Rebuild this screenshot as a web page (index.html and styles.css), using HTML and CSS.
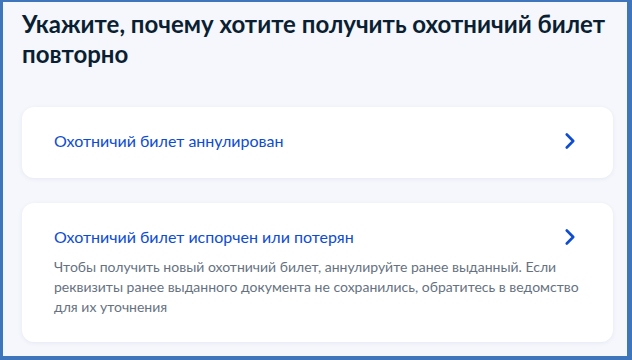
FILE: index.html
```html
<!DOCTYPE html>
<html lang="ru">
<head>
    <meta charset="UTF-8">
    <title>Охотничий билет повторно</title>
    <link rel="stylesheet" href="styles.css">
</head>
<body>
    <div class="frame">
        <h1>Укажите, почему хотите получить охотничий билет повторно</h1>
        <div class="option">
            <div class="option-row">
                <div class="option-title">Охотничий билет аннулирован</div>
                <svg class="chevron" width="12" height="16" viewBox="0 0 12 16"><path d="M1.8 1.5 L8.2 8 L1.8 14.5" fill="none" stroke="#0d4cd3" stroke-width="2.6" stroke-linecap="round" stroke-linejoin="round"/></svg>
            </div>
        </div>
        <div class="option">
            <div class="option-row">
                <div class="option-title">Охотничий билет испорчен или потерян</div>
                <svg class="chevron" width="12" height="16" viewBox="0 0 12 16"><path d="M1.8 1.5 L8.2 8 L1.8 14.5" fill="none" stroke="#0d4cd3" stroke-width="2.6" stroke-linecap="round" stroke-linejoin="round"/></svg>
            </div>
            <div class="option-text">Чтобы получить новый охотничий билет, аннулируйте ранее выданный. Если реквизиты ранее выданного документа не сохранились, обратитесь в ведомство для их уточнения</div>
        </div>
    </div>
</body>
</html>
```

FILE: styles.css
```css
body {
    margin: 0;
    font-family: Lato, "Noto Sans", sans-serif;
}
.frame {
    width: 632px;
    height: 360px;
    box-sizing: border-box;
    border-style: solid;
    border-color: #3f76bb;
    border-width: 2px 5px 4px 3px;
    background-color: #f5f7fc;
    padding: 7px 14px 0 19px;
    overflow: hidden;
}
h1 {
    margin: 0 0 38px 0;
    font-size: 24px;
    line-height: 30px;
    font-weight: bold;
    color: #0b1f33;
}
.option {
    background-color: #fff;
    border-radius: 12px;
    box-shadow: 0 1px 4px rgba(40, 70, 130, 0.08);
    padding: 22px 36px 25px 32px;
    margin-bottom: 25px;
}
.option-row {
    display: flex;
    align-items: center;
    justify-content: space-between;
}
.option-title {
    font-size: 16px;
    line-height: 24px;
    color: #0d4cd3;
}
.chevron {
    flex-shrink: 0;
}
.option-text {
    margin-top: 8px;
    margin-right: -10px;
    font-size: 14px;
    line-height: 20px;
    color: #66727f;
}
```
